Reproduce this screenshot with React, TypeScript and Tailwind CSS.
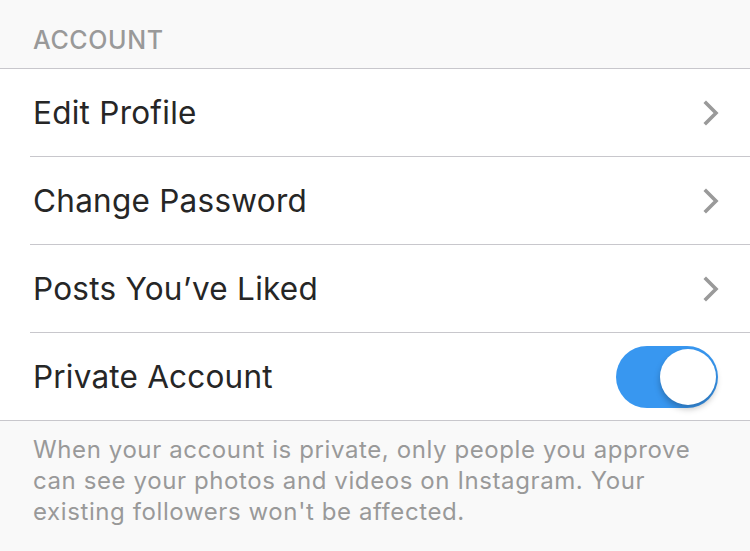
import React from 'react';

const rows = ['Edit Profile', 'Change Password', 'Posts You\u2019ve Liked'];

const Chevron = () => (
  <svg width="16" height="26" viewBox="0 0 16 26" fill="none" className="mr-[31px]">
    <path d="M3 3l10 10L3 23" stroke="#9a9a9a" strokeWidth="3.6" strokeLinecap="square" strokeLinejoin="miter" />
  </svg>
);

export default function App() {
  return (
    <div className="w-[750px] h-[551px] bg-[#f9f9f9] font-['Inter',sans-serif] overflow-hidden">
      {/* Section header */}
      <div className="h-[69px] pl-[33px] flex items-end pb-[15px] border-b border-[#c8c7cc]">
        <span className="text-[25px] leading-none font-medium tracking-[0.6px] text-[#999999]">ACCOUNT</span>
      </div>

      {/* Rows */}
      <div className="bg-white pl-[30px] border-b border-[#c8c7cc]">
        {rows.map((label) => (
          <div key={label} className="h-[88px] flex items-center justify-between border-b border-[#c8c7cc]">
            <span className="pl-[3px] text-[31.5px] tracking-[0.25px] text-[#262626]">{label}</span>
            <Chevron />
          </div>
        ))}
        <div className="h-[87px] flex items-center justify-between">
          <span className="pl-[3px] text-[31.5px] tracking-[0.2px] text-[#262626]">Private Account</span>
          <div className="relative w-[102px] h-[62px] mr-[32px] rounded-full bg-[#3897f0]">
            <div className="absolute right-[2px] top-[3px] w-[56px] h-[56px] rounded-full bg-white shadow-[0_4px_6px_rgba(0,0,0,0.25)]" />
          </div>
        </div>
      </div>

      {/* Footer note */}
      <p className="pl-[33px] pr-[30px] pt-[13px] text-[24px] leading-[31px] tracking-[0.6px] text-[#999999]">
        When your account is private, only people you approve can see your photos and videos on Instagram. Your existing followers won't be affected.
      </p>
    </div>
  );
}
